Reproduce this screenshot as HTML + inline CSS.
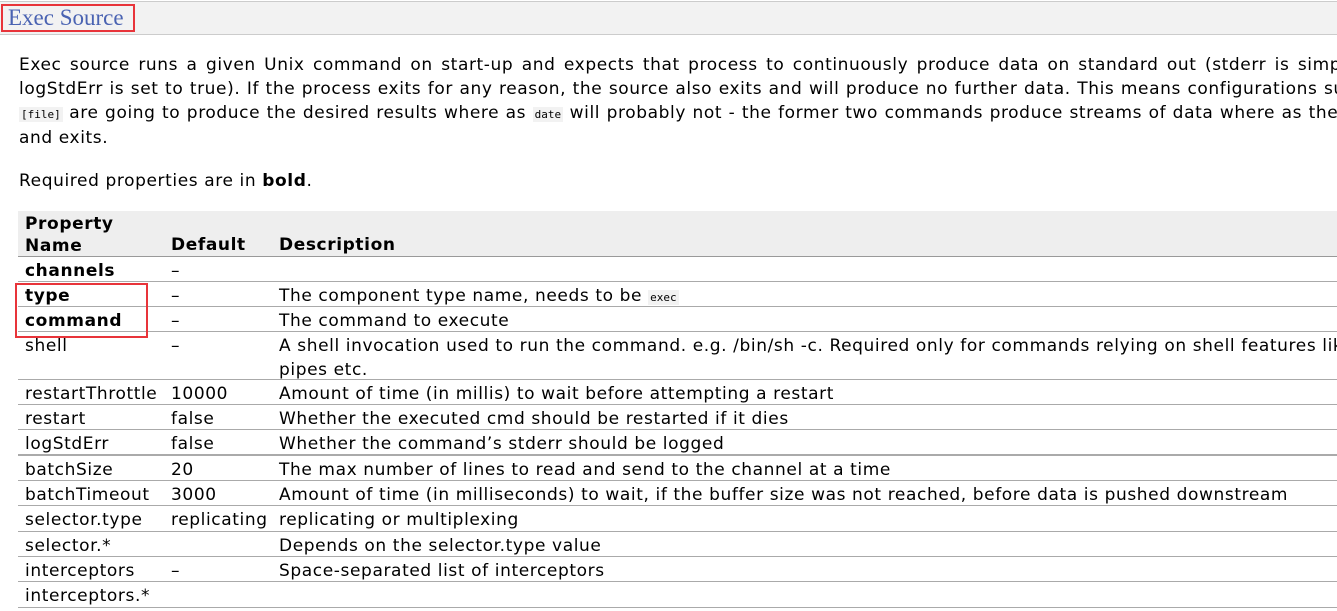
<!DOCTYPE html>
<html><head><meta charset="utf-8"><style>
html,body{margin:0;padding:0;width:1337px;height:611px;overflow:hidden;background:#fff}
body{font-family:"DejaVu Sans","Liberation Sans",sans-serif;font-size:17px;letter-spacing:0.6px;color:#000;position:relative}
.hbar{position:absolute;left:0;top:1px;width:1337px;height:34px;background:#f2f2f2;border-top:1px solid #ccc;border-bottom:1px solid #ccc;box-sizing:border-box}
.title{position:absolute;left:8px;top:5px;font-family:"Liberation Serif","DejaVu Serif",serif;font-size:23px;letter-spacing:0;color:#4a63b2;line-height:26px}
.box{position:absolute;border:2px solid #e8343a;box-sizing:border-box}
.p{position:absolute;left:19px;white-space:nowrap;line-height:24px}
code{font-family:"DejaVu Sans Mono","Liberation Mono",monospace;font-size:11px;letter-spacing:0;background:#f2f2f2;padding:1px 2px}
.row{position:absolute;left:18px;width:1330px;border-bottom:1px solid #aaa}
.row div{position:absolute;top:2px;line-height:24px;white-space:nowrap}
.c1{left:7px}.c2{left:153px}.c3{left:261px}
b{font-weight:bold}
</style></head><body>
<div class="hbar"></div>
<div class="title">Exec Source</div>
<div class="box" style="left:1px;top:4px;width:134px;height:28px"></div>

<div class="p" style="top:53px;word-spacing:2.4px">Exec source runs a given Unix command on start-up and expects that process to continuously produce data on standard out (stderr is simply</div>
<div class="p" style="top:77px;word-spacing:0.5px">logStdErr is set to true). If the process exits for any reason, the source also exits and will produce no further data. This means configurations such</div>
<div class="p" style="top:101px;word-spacing:0.5px"><code>[file]</code> are going to produce the desired results where as <code>date</code> will probably not - the former two commands produce streams of data where as the latter</div>
<div class="p" style="top:126px">and exits.</div>
<div class="p" style="top:169px">Required properties are in <b>bold</b>.</div>

<div class="row" style="top:211px;height:45px;background:#eeeeee;border-bottom-color:#999"><div class="c1" style="line-height:22px"><b>Property<br>Name</b></div><div class="c2" style="top:23px;line-height:22px"><b>Default</b></div><div class="c3" style="top:23px;line-height:22px"><b>Description</b></div></div>
<div class="row" style="top:257px;height:24px"><div class="c1"><b>channels</b></div><div class="c2">–</div></div>
<div class="row" style="top:282px;height:24px"><div class="c1"><b>type</b></div><div class="c2">–</div><div class="c3">The component type name, needs to be <code>exec</code></div></div>
<div class="row" style="top:307px;height:24px"><div class="c1"><b>command</b></div><div class="c2">–</div><div class="c3">The command to execute</div></div>
<div class="row" style="top:332px;height:47px"><div class="c1">shell</div><div class="c2">–</div><div class="c3">A shell invocation used to run the command. e.g. /bin/sh -c. Required only for commands relying on shell features like<br>pipes etc.</div></div>
<div class="row" style="top:380px;height:24px"><div class="c1">restartThrottle</div><div class="c2">10000</div><div class="c3">Amount of time (in millis) to wait before attempting a restart</div></div>
<div class="row" style="top:405px;height:24px"><div class="c1">restart</div><div class="c2">false</div><div class="c3">Whether the executed cmd should be restarted if it dies</div></div>
<div class="row" style="top:430px;height:24px;border-bottom:2px solid #aaa"><div class="c1">logStdErr</div><div class="c2">false</div><div class="c3">Whether the command’s stderr should be logged</div></div>
<div class="row" style="top:456px;height:24px"><div class="c1">batchSize</div><div class="c2">20</div><div class="c3">The max number of lines to read and send to the channel at a time</div></div>
<div class="row" style="top:481px;height:24px"><div class="c1">batchTimeout</div><div class="c2">3000</div><div class="c3">Amount of time (in milliseconds) to wait, if the buffer size was not reached, before data is pushed downstream</div></div>
<div class="row" style="top:506px;height:25px"><div class="c1">selector.type</div><div class="c2">replicating</div><div class="c3">replicating or multiplexing</div></div>
<div class="row" style="top:532px;height:24px"><div class="c1">selector.*</div><div class="c3">Depends on the selector.type value</div></div>
<div class="row" style="top:557px;height:24px"><div class="c1">interceptors</div><div class="c2">–</div><div class="c3">Space-separated list of interceptors</div></div>
<div class="row" style="top:582px;height:25px"><div class="c1">interceptors.*</div></div>

<div class="box" style="left:15px;top:283px;width:133px;height:55px"></div>
</body></html>
